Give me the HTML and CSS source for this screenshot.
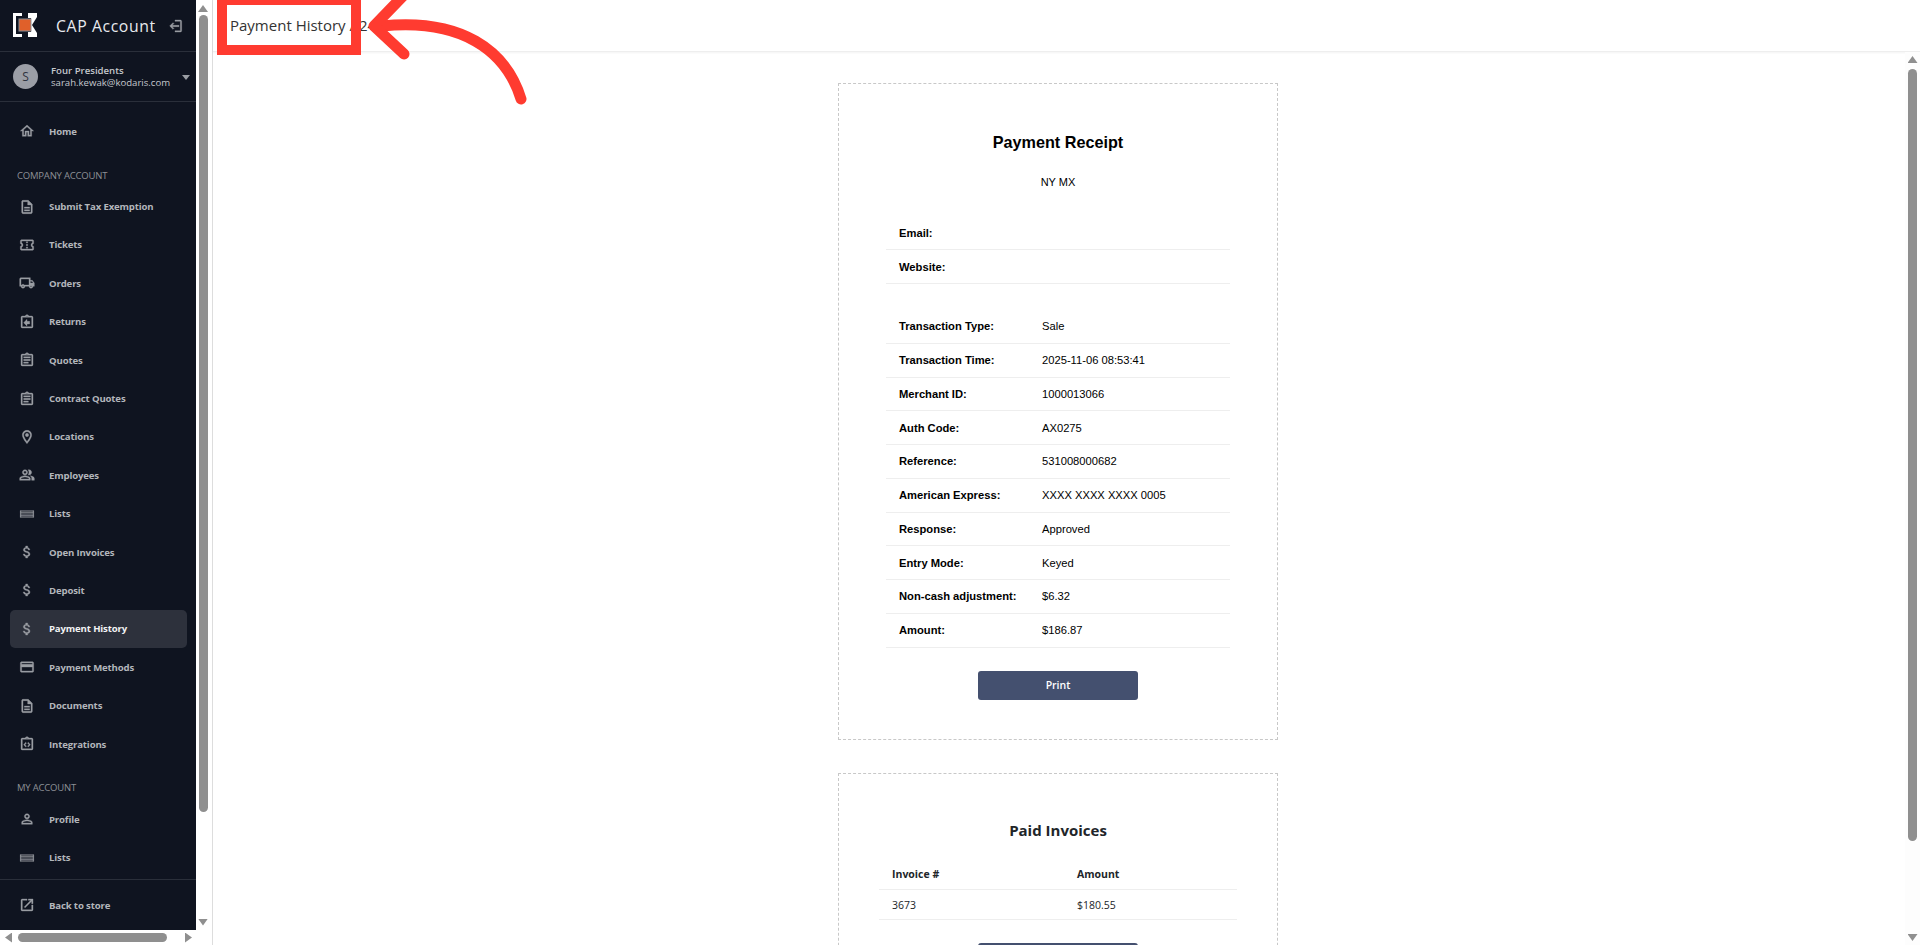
FILE: index.html
```html
<!DOCTYPE html>
<html lang="en">
<head>
  <meta charset="UTF-8">
  <meta name="viewport" content="width=device-width, initial-scale=1.0">
  <title>Payment History</title>
  <link rel="stylesheet" href="styles.css">
</head>
<body>
  <svg class="defs" width="0" height="0">
    <symbol id="i-doc" viewBox="0 0 24 24"><path d="M8 16h8v2H8zm0-4h8v2H8zm6-10H6c-1.1 0-2 .9-2 2v16c0 1.1.89 2 1.99 2H18c1.1 0 2-.9 2-2V8l-6-6zm4 18H6V4h7v5h5v11z"/></symbol>
    <symbol id="i-quote" viewBox="0 0 24 24"><path d="M7 15h7v2H7zm0-4h10v2H7zm0-4h10v2H7zm12-4h-4.18C14.4 1.84 13.3 1 12 1c-1.3 0-2.4.84-2.82 2H5c-1.1 0-2 .9-2 2v14c0 1.1.9 2 2 2h14c1.1 0 2-.9 2-2V5c0-1.1-.9-2-2-2zm-7-.25c.41 0 .75.34.75.75s-.34.75-.75.75-.75-.34-.75-.75.34-.75.75-.75zM19 19H5V5h14v14z"/></symbol>
    <symbol id="i-money" viewBox="0 0 24 24"><path d="M11.8 10.9c-2.27-.59-3-1.2-3-2.15 0-1.09 1.01-1.85 2.7-1.85 1.78 0 2.44.85 2.5 2.1h2.21c-.07-1.72-1.12-3.3-3.21-3.81V3h-3v2.16c-1.94.42-3.5 1.68-3.5 3.61 0 2.31 1.91 3.46 4.7 4.13 2.5.6 3 1.48 3 2.41 0 .69-.49 1.79-2.7 1.79-2.06 0-2.87-.92-2.98-2.1h-2.2c.12 2.19 1.76 3.42 3.68 3.83V21h3v-2.15c1.95-.37 3.5-1.5 3.5-3.55 0-2.84-2.43-3.81-4.7-4.4z"/></symbol>
    <symbol id="i-list" viewBox="0 0 24 24"><path d="M2 7h20v1H2zm0 2.9h20v.8H2zm0 3.4h20v.8H2zm0 2.7h20v1H2zM2 7h1v10H2zm19 0h1v10h-1z"/></symbol>
  </svg>

  <aside class="sidebar">
    <div class="brand">
      <svg class="logo" viewBox="0 0 24 24">
        <path fill="#fff" d="M0 0h9v3H3v18h6v3H0z"/>
        <path fill="#fff" d="M15 0h9v4l-5 8 5 8v4h-9v-5h3V5h-3z"/>
        <rect x="6" y="6" width="12" height="12" fill="#e0602a" stroke="#8a8f98" stroke-width="1"/>
      </svg>
      <span class="brand-name">CAP Account</span>
      <svg class="icon logout" viewBox="0 0 24 24"><path d="M9 7l1.4 1.4L7.8 11H18v2H7.8l2.6 2.6L9 17l-5-5zM12 3h8c1.1 0 2 .9 2 2v14c0 1.1-.9 2-2 2h-8v-2h8V5h-8z"/></svg>
    </div>
    <div class="user">
      <div class="avatar">S</div>
      <div class="user-text">
        <div class="user-company">Four Presidents</div>
        <div>sarah.kewak@kodaris.com</div>
      </div>
      <span class="caret"></span>
    </div>

    <nav class="nav">
      <a class="nav-item nav-home"><svg class="icon" viewBox="0 0 24 24"><path d="M12 5.69l5 4.5V18h-2v-6H9v6H7v-7.81l5-4.5M12 3L2 12h3v8h6v-6h2v6h6v-8h3L12 3z"/></svg>Home</a>
      <div class="nav-label">COMPANY ACCOUNT</div>
      <a class="nav-item"><svg class="icon"><use href="#i-doc"/></svg>Submit Tax Exemption</a>
      <a class="nav-item"><svg class="icon" viewBox="0 0 24 24"><path d="M22 10V6c0-1.11-.9-2-2-2H4c-1.1 0-1.99.89-1.99 2v4c1.1 0 1.99.9 1.99 2s-.89 2-2 2v4c0 1.1.9 2 2 2h16c1.1 0 2-.9 2-2v-4c-1.1 0-2-.9-2-2s.9-2 2-2zm-2-1.46c-1.19.69-2 1.99-2 3.46s.81 2.77 2 3.46V18H4v-2.54c1.19-.69 2-1.99 2-3.46 0-1.48-.8-2.77-1.99-3.46L4 6h16v2.54zM11 15h2v2h-2zm0-4h2v2h-2zm0-4h2v2h-2z"/></svg>Tickets</a>
      <a class="nav-item"><svg class="icon" viewBox="0 0 24 24"><path d="M20 8h-3V4H3c-1.1 0-2 .9-2 2v11h2c0 1.66 1.34 3 3 3s3-1.34 3-3h6c0 1.66 1.34 3 3 3s3-1.34 3-3h2v-5l-3-4zm-.5 1.5l1.96 2.5H17V9.5h2.5zM6 18c-.55 0-1-.45-1-1s.45-1 1-1 1 .45 1 1-.45 1-1 1zm2.22-3c-.55-.61-1.33-1-2.22-1s-1.67.39-2.22 1H3V6h12v9H8.22zM18 18c-.55 0-1-.45-1-1s.45-1 1-1 1 .45 1 1-.45 1-1 1z"/></svg>Orders</a>
      <a class="nav-item"><svg class="icon" viewBox="0 0 24 24"><path d="M19 3h-4.18C14.4 1.84 13.3 1 12 1c-1.3 0-2.4.84-2.82 2H5c-1.1 0-2 .9-2 2v14c0 1.1.9 2 2 2h14c1.1 0 2-.9 2-2V5c0-1.1-.9-2-2-2zm-7-.25c.41 0 .75.34.75.75s-.34.75-.75.75-.75-.34-.75-.75.34-.75.75-.75zM19 19H5V5h14v14zM12 8l-5 5 5 5v-3h4v-4h-4z"/></svg>Returns</a>
      <a class="nav-item"><svg class="icon"><use href="#i-quote"/></svg>Quotes</a>
      <a class="nav-item"><svg class="icon"><use href="#i-quote"/></svg>Contract Quotes</a>
      <a class="nav-item"><svg class="icon" viewBox="0 0 24 24"><path d="M12 2C8.13 2 5 5.13 5 9c0 5.25 7 13 7 13s7-7.75 7-13c0-3.87-3.13-7-7-7zM7 9c0-2.76 2.24-5 5-5s5 2.24 5 5c0 2.88-2.88 7.19-5 9.88C9.92 16.21 7 11.85 7 9z"/><circle cx="12" cy="9" r="2.5"/></svg>Locations</a>
      <a class="nav-item"><svg class="icon" viewBox="0 0 24 24"><path d="M16.67 13.13C18.04 14.06 19 15.32 19 17v3h4v-3c0-2.18-3.57-3.47-6.33-3.87zM15 12c2.21 0 4-1.79 4-4s-1.79-4-4-4c-.47 0-.91.1-1.33.24C14.5 5.27 15 6.58 15 8s-.5 2.73-1.33 3.76c.42.14.86.24 1.33.24zM9 12c2.21 0 4-1.79 4-4s-1.79-4-4-4-4 1.79-4 4 1.79 4 4 4zm0-6c1.1 0 2 .9 2 2s-.9 2-2 2-2-.9-2-2 .9-2 2-2zM9 13c-2.67 0-8 1.34-8 4v3h16v-3c0-2.66-5.33-4-8-4zm6 5H3v-.99C3.2 16.29 6.3 15 9 15s5.8 1.29 6 2z"/></svg>Employees</a>
      <a class="nav-item"><svg class="icon"><use href="#i-list"/></svg>Lists</a>
      <a class="nav-item"><svg class="icon"><use href="#i-money"/></svg>Open Invoices</a>
      <a class="nav-item"><svg class="icon"><use href="#i-money"/></svg>Deposit</a>
      <a class="nav-item active"><svg class="icon"><use href="#i-money"/></svg>Payment History</a>
      <a class="nav-item"><svg class="icon" viewBox="0 0 24 24"><path d="M20 4H4c-1.11 0-1.99.89-1.99 2L2 18c0 1.11.89 2 2 2h16c1.11 0 2-.89 2-2V6c0-1.11-.89-2-2-2zm0 14H4v-6h16v6zm0-10H4V6h16v2z"/></svg>Payment Methods</a>
      <a class="nav-item"><svg class="icon"><use href="#i-doc"/></svg>Documents</a>
      <a class="nav-item"><svg class="icon" viewBox="0 0 24 24"><path d="M19 3h-4.18C14.4 1.84 13.3 1 12 1c-1.3 0-2.4.84-2.82 2H5c-1.1 0-2 .9-2 2v14c0 1.1.9 2 2 2h14c1.1 0 2-.9 2-2V5c0-1.1-.9-2-2-2zm-7-.25c.41 0 .75.34.75.75s-.34.75-.75.75-.75-.34-.75-.75.34-.75.75-.75zM19 19H5V5h14v14zM10 9.5L7 13l3 3.5 1.2-1-2.1-2.5 2.1-2.5zm4 0l-1.2 1 2.1 2.5-2.1 2.5 1.2 1 3-3.5z"/></svg>Integrations</a>
      <div class="nav-label nav-label-my">MY ACCOUNT</div>
      <a class="nav-item"><svg class="icon" viewBox="0 0 24 24"><path d="M12 5.9c1.16 0 2.1.94 2.1 2.1s-.94 2.1-2.1 2.1S9.9 9.16 9.9 8s.94-2.1 2.1-2.1m0 9c2.97 0 6.1 1.46 6.1 2.1v1.1H5.9V17c0-.64 3.13-2.1 6.1-2.1M12 4C9.79 4 8 5.79 8 8s1.79 4 4 4 4-1.79 4-4-1.79-4-4-4zm0 9c-2.67 0-8 1.34-8 4v3h16v-3c0-2.66-5.33-4-8-4z"/></svg>Profile</a>
      <a class="nav-item"><svg class="icon"><use href="#i-list"/></svg>Lists</a>
    </nav>

    <div class="nav-foot">
      <a class="nav-item"><svg class="icon" viewBox="0 0 24 24"><path d="M19 19H5V5h7V3H5c-1.11 0-2 .9-2 2v14c0 1.1.89 2 2 2h14c1.1 0 2-.9 2-2v-7h-2v7zM14 3v2h3.59l-9.83 9.83 1.41 1.41L19 6.41V10h2V3h-7z"/></svg>Back to store</a>
    </div>
  </aside>

  <div class="side-scroll">
    <span class="arrow arrow-up"></span>
    <div class="side-thumb"></div>
    <span class="arrow arrow-down"></span>
  </div>
  <div class="side-hscroll">
    <span class="arrow arrow-left"></span>
    <div class="side-hthumb"></div>
    <span class="arrow arrow-right"></span>
  </div>

  <div class="page">
    <header class="topbar">Payment History / 24</header>
    <div class="page-body">
      <main class="content">
        <section class="card">
          <h2 class="receipt-title">Payment Receipt</h2>
          <p class="receipt-sub">NY MX</p>
          <table class="receipt-table contact-table">
            <tr><th>Email:</th><td></td></tr>
            <tr><th>Website:</th><td></td></tr>
          </table>
          <table class="receipt-table">
            <tr><th>Transaction Type:</th><td>Sale</td></tr>
            <tr><th>Transaction Time:</th><td>2025-11-06 08:53:41</td></tr>
            <tr><th>Merchant ID:</th><td>1000013066</td></tr>
            <tr><th>Auth Code:</th><td>AX0275</td></tr>
            <tr><th>Reference:</th><td>531008000682</td></tr>
            <tr><th>American Express:</th><td>XXXX XXXX XXXX 0005</td></tr>
            <tr><th>Response:</th><td>Approved</td></tr>
            <tr><th>Entry Mode:</th><td>Keyed</td></tr>
            <tr><th>Non-cash adjustment:</th><td>$6.32</td></tr>
            <tr><th>Amount:</th><td>$186.87</td></tr>
          </table>
          <button class="print-btn">Print</button>
        </section>

        <section class="card card-invoices">
          <h2 class="invoices-title">Paid Invoices</h2>
          <table class="invoices-table">
            <tr><th>Invoice #</th><th>Amount</th></tr>
            <tr><td>3673</td><td>$180.55</td></tr>
          </table>
          <button class="print-btn" aria-label="Print"></button>
        </section>
      </main>
      <div class="page-scroll">
        <span class="arrow arrow-up"></span>
        <div class="page-thumb"></div>
        <span class="arrow arrow-down"></span>
      </div>
    </div>
  </div>

  <!-- annotation drawn over the screenshot -->
  <div class="note-box"></div>
  <svg class="note-arrow" viewBox="0 0 200 120" width="200" height="120">
    <path d="M165 99C150 50 105 18 26 26" />
    <path d="M48 -5L18 26L48 54" />
  </svg>
</body>
</html>
```

FILE: styles.css
```css
* {box-sizing: border-box;}
html, body {height: 100%;}
body {margin: 0; display: flex; overflow: hidden; background: #fff; font-family: "Open Sans", sans-serif; color: #212529;}
.defs {position: absolute;}

/* sidebar */
.sidebar {width: 196px; height: 930px; flex: none; display: flex; flex-direction: column; background: #0f1420; color: #b9bcc2;}
.brand {height: 52px; flex: none; display: flex; align-items: center; padding: 0 14px 0 13px; border-bottom: 1px solid #2a2f3a;}
.logo {width: 24px; height: 24px; flex: none; margin-top: -1px;}
.brand-name {margin-left: 19px; font-size: 15.8px; letter-spacing: .6px; color: #e8eaee; white-space: nowrap;}
.icon {width: 16px; height: 16px; flex: none; fill: #9a9da3; stroke: #9a9da3; stroke-width: .5;}
.logout {margin-left: auto; margin-right: -1px;}
.user {height: 50px; flex: none; display: flex; align-items: center; padding: 0 6px 0 13px; border-bottom: 1px solid #2a2f3a;}
.avatar {width: 25px; height: 25px; flex: none; border-radius: 50%; background: #9b9ea6; color: #2f3340; font-size: 12px; display: flex; align-items: center; justify-content: center;}
.user-text {margin-left: 13px; font-size: 9.6px; line-height: 12px; color: #c5c8cd; white-space: nowrap;}
.user-company {font-weight: 600;}
.caret {margin-left: auto; margin-top: 2px; border: 4px solid transparent; border-top: 5px solid #9a9da3; border-bottom: 0;}

.nav {flex: 1; padding-top: 10px;}
.nav-item {height: 38.4px; display: flex; align-items: center; gap: 14px; margin: 0 9px 0 10px; padding-left: 9px; border-radius: 5px; font-size: 9.6px; font-weight: 700; letter-spacing: -.15px; color: #b3b6bb; white-space: nowrap;}
.nav-label {height: 17px; margin: 17px 0 3px 17px; font-size: 9.5px; line-height: 17px; color: #8d9096; letter-spacing: -.2px;}
.nav-label-my {margin-top: 15.5px; margin-bottom: 4.5px;}
.active {background: #2d313c; color: #f2f3f5;}
.nav-foot {height: 51px; flex: none; border-top: 1px solid #2a2f3a; padding-top: 6px;}

/* fake native scrollbars, sidebar and page */
.arrow {display: block; flex: none; width: 10px; height: 7px; background: #8f8f8f;}
.arrow-up {clip-path: polygon(50% 0, 100% 100%, 0 100%);}
.arrow-down {clip-path: polygon(0 0, 100% 0, 50% 100%);}
.arrow-left {width: 7px; height: 10px; clip-path: polygon(100% 0, 100% 100%, 0 50%);}
.arrow-right {width: 7px; height: 10px; clip-path: polygon(0 0, 100% 50%, 0 100%);}
.side-scroll {width: 17px; height: 945px; flex: none; display: flex; flex-direction: column; align-items: center; padding: 5px 2px 0 0; border-right: 1px solid #ddd;}
.side-thumb {width: 9px; height: 797px; flex: none; margin-top: 3px; background: #8f8f8f; border-radius: 5px;}
.side-scroll .arrow-down {margin-top: 106.5px;}
.side-hscroll {position: absolute; left: 0; top: 930px; width: 196px; height: 15px; display: flex; align-items: center; padding-left: 5px;}
.side-hthumb {width: 149px; height: 9px; flex: none; margin-left: 6px; background: #8f8f8f; border-radius: 5px;}
.side-hscroll .arrow-right {margin-left: 18px;}

/* page */
.page {flex: 1; min-width: 0; height: 945px; display: flex; flex-direction: column;}
.topbar {height: 52px; flex: none; padding: 0 0 0 17px; font-size: 15px; line-height: 50px; color: #333; border-bottom: 1px solid #eee; box-shadow: 0 1px 2px rgba(0, 0, 0, .05);}
.page-body {flex: 1; min-height: 0; display: flex;}
.content {flex: 1; min-width: 0; overflow: hidden; padding: 31px 2px 0 0; font-family: "Liberation Sans", Arial, sans-serif;}
.page-scroll {width: 15px; flex: none; display: flex; flex-direction: column; align-items: center; padding-top: 4px; background: #fdfdfd;}
.page-thumb {width: 9px; height: 772px; flex: none; margin-top: 6px; background: #8f8f8f; border-radius: 5px;}
.page-scroll .arrow-down {margin-top: 93px;}

.card {width: 440px; height: 657px; margin: 0 auto 33px; padding-top: 46px; border: 1px dashed #c8c8c8; text-align: center; color: #000;}
.receipt-title {margin: 0; font-size: 16.2px; line-height: 24px; font-weight: 700;}
.receipt-sub {margin: 19.5px 0 0; font-size: 11px; line-height: 16px;}
.receipt-table {width: 344px; margin: 0 auto; border-collapse: collapse; table-layout: fixed; font-size: 11.2px; text-align: left;}
.receipt-table th {width: 156px; padding: 0 0 0 13px; font-weight: 700; white-space: nowrap;}
.receipt-table td {padding: 0;}
.receipt-table tr {height: 33.75px; border-bottom: 1px solid #eee;}
.contact-table {margin-top: 26.5px; margin-bottom: 25.5px;}
.print-btn {display: block; width: 160px; height: 29px; margin: 23px auto 0; border: 0; border-radius: 3px; background: #44506f; color: #fff; font-family: "Open Sans", sans-serif; font-size: 10.5px; font-weight: 600;}

.card-invoices {padding-top: 44px; font-family: "Open Sans", sans-serif; color: #212529;}
.invoices-title {margin: 0; font-size: 15px; line-height: 24px; font-weight: 700;}
.invoices-table {width: 358px; margin: 17.5px auto 0; border-collapse: collapse; table-layout: fixed; font-size: 10.5px; text-align: left;}
.invoices-table th, .invoices-table td {padding: 0 0 0 13px; font-weight: 400; height: 30px;}
.invoices-table th:first-child {width: 185px;}
.invoices-table th {font-weight: 700;}
.invoices-table tr {border-bottom: 1px solid #eee;}

/* red annotation */
.note-box {position: absolute; left: 217px; top: -5px; width: 144px; height: 60px; border: 10px solid #ff3b30;}
.note-arrow {position: absolute; left: 356px; top: 0; fill: none; stroke: #ff3b30; stroke-width: 11; stroke-linecap: round; stroke-linejoin: round; overflow: hidden;}
```
